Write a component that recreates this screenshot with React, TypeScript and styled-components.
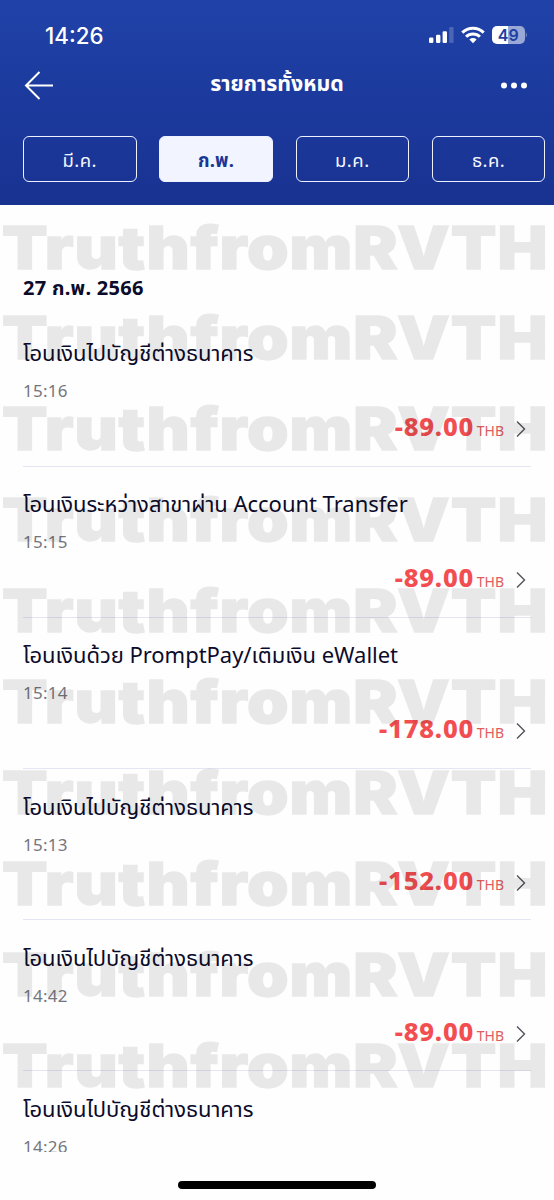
import React from "react";
import styled, { createGlobalStyle } from "styled-components";

const GlobalStyle = createGlobalStyle`
  * { box-sizing: border-box; }
  body { margin: 0; background: #fefefe; }
`;

const Screen = styled.main`
  position: relative;
  width: 554px;
  height: 1200px;
  overflow: hidden;
  display: flex;
  flex-direction: column;
  background: #fefefe;
  color: #0b0b2b;
  font-family: "Noto Sans", "Noto Sans Thai", sans-serif;
`;

const Header = styled.header`
  height: 205px;
  flex: none;
  background: linear-gradient(#2042a8, #1b389b 60%, #183290);
  color: #fff;
`;

const StatusBar = styled.div`
  height: 60px;
  padding: 12px 27px 0 45px;
  display: flex;
  justify-content: space-between;
`;

const Clock = styled.span`
  font: 500 22.3px/47px Inter, sans-serif;
`;

const StatusIcons = styled.div`
  display: flex;
  padding-top: 13px;
`;

const NavBar = styled.nav`
  height: 50px;
  padding: 0 27px 0 24px;
  display: grid;
  grid-template-columns: 80px 1fr 77px;
  align-items: center;
`;

const Title = styled.h1`
  margin: 0;
  padding-bottom: 4px;
  text-align: center;
  font-size: 21.3px;
  font-weight: 700;
  line-height: 44px;
  white-space: nowrap;
`;

const MoreIcon = styled.svg`
  justify-self: end;
`;

const Tabs = styled.div`
  display: flex;
  gap: 22.8px;
  padding: 26px 0 0 23px;
`;

const Tab = styled.button<{ $active?: boolean }>`
  flex: none;
  width: 113.5px;
  height: 46px;
  padding: 4px 0 0;
  border: 1.5px solid #eef1ff;
  border-radius: 6px;
  background: ${(p) => (p.$active ? "#f2f4ff" : "transparent")};
  color: ${(p) => (p.$active ? "#1b3796" : "#f4f6ff")};
  font-family: inherit;
  font-size: 18.5px;
  font-weight: ${(p) => (p.$active ? 700 : 400)};
  letter-spacing: ${(p) => (p.$active ? "0.2px" : "0.5px")};
`;

const List = styled.section`
  height: 947px;
  padding: 0 23px;
  overflow: hidden;
`;

const DateHeading = styled.h2`
  margin: 0;
  padding-top: 69px;
  height: 110.4px;
  font-size: 20px;
  font-weight: 700;
  line-height: 28px;
  letter-spacing: 0.28px;
`;

const Item = styled.article`
  height: 151.2px;
  padding-top: 15.6px;
  border-bottom: 1.5px solid #e4e5f3;
`;

const ItemTitle = styled.div`
  height: 43px;
  font-size: 22px;
  line-height: 42px;
  letter-spacing: -0.03px;
  white-space: nowrap;
`;

const ItemTime = styled.div`
  height: 34px;
  color: #75757d;
  font-size: 17px;
  line-height: 34px;
  letter-spacing: 0.25px;
`;

const AmountRow = styled.div`
  height: 38px;
  padding-right: 5px;
  display: flex;
  justify-content: flex-end;
  align-items: baseline;
  line-height: 38px;
`;

const Amount = styled.span`
  color: #f24e52;
  font-size: 25.6px;
  font-weight: 800;
  letter-spacing: 0.8px;
`;

const Currency = styled.span`
  margin: 0 12px 0 2.6px;
  color: #df5c60;
  font-size: 14px;
`;

const ChevronSlot = styled.span`
  display: flex;
  align-self: center;
  padding-top: 4px;
`;

const Watermarks = styled.div`
  position: absolute;
  top: 201.5px;
  left: 1.5px;
  opacity: 0.083;
  transform: scaleX(1.12);
  transform-origin: left;
  pointer-events: none;
`;

const Watermark = styled.div`
  height: 90.9px;
  color: #000;
  font: 900 59.4px/90.9px Inter, sans-serif;
  letter-spacing: 0.8px;
  -webkit-text-stroke: 1.3px #000;
  white-space: nowrap;
`;

const HomeIndicator = styled.div`
  width: 198px;
  height: 7.5px;
  margin: 29.3px auto 0;
  border-radius: 4px;
  background: #000;
`;

const months = ["มี.ค.", "ก.พ.", "ม.ค.", "ธ.ค."];

const transactions = [
  { title: "โอนเงินไปบัญชีต่างธนาคาร", time: "15:16", amount: "-89.00" },
  { title: "โอนเงินระหว่างสาขาผ่าน Account Transfer", time: "15:15", amount: "-89.00" },
  { title: "โอนเงินด้วย PromptPay/เติมเงิน eWallet", time: "15:14", amount: "-178.00" },
  { title: "โอนเงินไปบัญชีต่างธนาคาร", time: "15:13", amount: "-152.00" },
  { title: "โอนเงินไปบัญชีต่างธนาคาร", time: "14:42", amount: "-89.00" },
  { title: "โอนเงินไปบัญชีต่างธนาคาร", time: "14:26" },
];

function StatusGlyphs() {
  return (
    <svg width="99" height="20" viewBox="0 0 99 20" fill="#fff">
      <rect x="1" y="12.5" width="4.4" height="5.5" rx="1.2" />
      <rect x="8" y="9.8" width="4.4" height="8.2" rx="1.2" />
      <rect x="14.6" y="6.3" width="4.4" height="11.7" rx="1.2" />
      <rect x="21.2" y="2" width="4.4" height="16" rx="1.2" opacity="0.2" />
      <g fill="none" stroke="#fff" strokeWidth="3">
        <path d="M34.3 7.6a15.3 15.3 0 0 1 21.4 0" />
        <path d="M38.1 11.8a9.8 9.8 0 0 1 13.8 0" />
      </g>
      <path d="M45 18.2l-3.6-3.7a5.3 5.3 0 0 1 7.2 0z" />
      <path d="M69 1h11v18H69a5 5 0 0 1-5-5V6a5 5 0 0 1 5-5z" />
      <path d="M80 1h12a5 5 0 0 1 5 5v8a5 5 0 0 1-5 5H80z" opacity="0.55" />
      <path d="M97.8 7.3q1.8 2.7 0 5.4z" opacity="0.55" />
      <text x="80.3" y="15.8" textAnchor="middle" fill="#1f3fa3" fontFamily="Inter, sans-serif" fontSize="16" fontWeight="600">49</text>
    </svg>
  );
}

function Chevron() {
  return (
    <svg width="10" height="18" viewBox="0 0 10 18" fill="none" stroke="#51525c" strokeWidth="1.4">
      <path d="M1 1.5l7.5 7.5L1 16.5" />
    </svg>
  );
}

export default function App() {
  return (
    <Screen>
      <GlobalStyle />
      <Header>
        <StatusBar>
          <Clock>14:26</Clock>
          <StatusIcons>
            <StatusGlyphs />
          </StatusIcons>
        </StatusBar>
        <NavBar>
          <svg width="30" height="30" viewBox="0 0 30 30" fill="none" stroke="#fff" strokeWidth="2">
            <path d="M29 15.5H2M15.5 2L2 15.5l13.5 13.5" />
          </svg>
          <Title>รายการทั้งหมด</Title>
          <MoreIcon width="26" height="8" viewBox="0 0 26 8" fill="#fff">
            <circle cx="3" cy="4.4" r="3" />
            <circle cx="13" cy="4.4" r="3" />
            <circle cx="23" cy="4.4" r="3" />
          </MoreIcon>
        </NavBar>
        <Tabs>
          {months.map((month, i) => (
            <Tab key={month} $active={i === 1}>{month}</Tab>
          ))}
        </Tabs>
      </Header>
      <List>
        <DateHeading>27 ก.พ. 2566</DateHeading>
        {transactions.map((t) => (
          <Item key={t.time}>
            <ItemTitle>{t.title}</ItemTitle>
            <ItemTime>{t.time}</ItemTime>
            {t.amount && (
              <AmountRow>
                <Amount>{t.amount}</Amount>
                <Currency>THB</Currency>
                <ChevronSlot><Chevron /></ChevronSlot>
              </AmountRow>
            )}
          </Item>
        ))}
      </List>
      <Watermarks aria-hidden>
        {Array.from({ length: 10 }, (_, i) => (
          <Watermark key={i}>TruthfromRVTH</Watermark>
        ))}
      </Watermarks>
      <HomeIndicator />
    </Screen>
  );
}
